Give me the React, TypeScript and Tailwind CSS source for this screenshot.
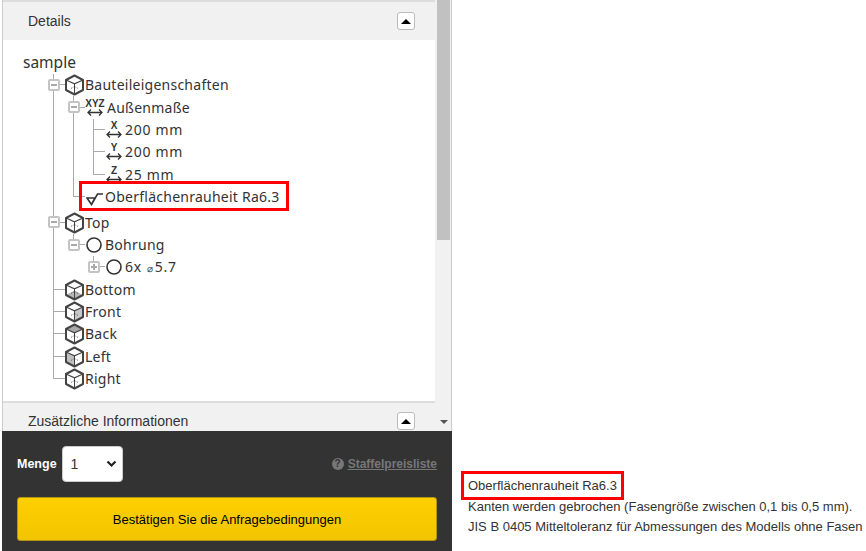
import React from "react";

type Face = "none" | "bottom" | "front" | "back" | "left";

// cube icon, gray face depends on the view
function Cube({ face = "none" }: { face?: Face }) {
  return (
    <svg width="19" height="22" viewBox="0 0 19 22" className="shrink-0" fill="none">
      {face === "bottom" && <path d="M1 16 9.5 11.5 18 16 9.5 20.5Z" fill="#b8b8b8" />}
      {face === "front" && <path d="M9.5 10 18 6V16L9.5 20.5Z" fill="#c8c8c8" />}
      {face === "back" && <path d="M1 6 9.5 1.5 18 6 9.5 10Z" fill="#a8a8a8" />}
      {face === "left" && <path d="M1 6 9.5 10V20.5L1 16Z" fill="#c0c0c0" />}
      <path d="M1 6 9.5 1.5 18 6V16L9.5 20.5 1 16Z" stroke="#444" strokeWidth="2" strokeLinejoin="round" />
      <path d="M1 6 9.5 9.8 18 6" stroke="#444" strokeWidth="1.2" />
      <path d="M9.5 10V20" stroke="#444" strokeWidth="1" />
      <path d="M9.5 12.5 5 15M9.5 12.5 14 15" stroke="#333" strokeWidth="1" strokeDasharray="1 1.6" />
    </svg>
  );
}

function Circle() {
  return (
    <svg width="16" height="16" viewBox="0 0 16 16" className="ml-px mr-[2px] shrink-0" fill="none">
      <circle cx="8" cy="8" r="7" stroke="#333" strokeWidth="1.6" />
    </svg>
  );
}

function Dim({ label, width = 16 }: { label: string; width?: number }) {
  return (
    <span className="ml-px mr-[2px] flex shrink-0 flex-col items-center" style={{ width }}>
      <span className="font-['Liberation_Sans',sans-serif] text-[10px] font-bold leading-[9px] tracking-normal text-[#333]">{label}</span>
      <svg width="16" height="9" viewBox="0 0 16 9" fill="none">
        <path d="M1 4.5H15M4 1.5 1 4.5 4 7.5M12 1.5 15 4.5 12 7.5" stroke="#333" strokeWidth="1.3" />
      </svg>
    </span>
  );
}

function Rough() {
  return (
    <svg width="18" height="14" viewBox="0 0 18 14" className="ml-px mt-1 shrink-0" fill="none">
      <path d="M1 6H9L5.5 12.5 1 6ZM5.5 12.5 11.5 2H17" stroke="#333" strokeWidth="1.6" />
    </svg>
  );
}

function Toggle({ plus }: { plus?: boolean }) {
  return (
    <span className="absolute left-[-5px] top-[5px] flex h-3 w-3 items-center justify-center rounded-[2px] border-2 border-[#c4c4c4] bg-white">
      <span className="relative block h-[2px] w-[6px] bg-[#aaa]">
        {plus && <span className="absolute left-[2px] top-[-2px] block h-[6px] w-[2px] bg-[#aaa]" />}
      </span>
    </span>
  );
}

type Node = {
  depth: number;
  icon: React.ReactNode;
  text: React.ReactNode;
  toggle?: "minus" | "plus";
  guides?: number[]; // depths that keep a vertical line running past this row
  last?: boolean;
  mark?: boolean;
};

const rows: Node[] = [
  { depth: 0, icon: <Cube />, text: "Bauteileigenschaften", toggle: "minus" },
  { depth: 1, icon: <Dim label="XYZ" width={18} />, text: "Außenmaße", toggle: "minus", guides: [0] },
  { depth: 2, icon: <Dim label="X" />, text: <span className="tracking-[0.7px]">200 mm</span>, guides: [0, 1] },
  { depth: 2, icon: <Dim label="Y" />, text: <span className="tracking-[0.7px]">200 mm</span>, guides: [0, 1] },
  { depth: 2, icon: <Dim label="Z" />, text: <span className="tracking-[0.7px]">25 mm</span>, guides: [0, 1], last: true },
  { depth: 1, icon: <Rough />, text: "Oberflächenrauheit Ra6.3", guides: [0], last: true, mark: true },
  { depth: 0, icon: <Cube />, text: "Top", toggle: "minus" },
  { depth: 1, icon: <Circle />, text: "Bohrung", toggle: "minus", guides: [0], last: true },
  {
    depth: 2,
    icon: <Circle />,
    text: (
      <span className="tracking-[0.7px]">
        6x <span className="mx-px text-[10px]">⌀</span>5.7
      </span>
    ),
    toggle: "plus",
    guides: [0],
    last: true,
  },
  { depth: 0, icon: <Cube face="bottom" />, text: "Bottom" },
  { depth: 0, icon: <Cube face="front" />, text: "Front" },
  { depth: 0, icon: <Cube face="back" />, text: "Back" },
  { depth: 0, icon: <Cube face="left" />, text: "Left" },
  { depth: 0, icon: <Cube />, text: "Right", last: true },
];

function TreeRow({ node }: { node: Node }) {
  const levels = [];
  for (let i = 0; i < node.depth; i++) {
    levels.push(
      <span key={i} className={`h-full w-5 shrink-0 ${node.guides?.includes(i) ? "border-l border-[#aaa]" : ""}`} />
    );
  }
  return (
    <>
      <div className="flex h-[22.4px] items-stretch">
        {levels}
        <span className="relative flex w-[12px] shrink-0 flex-col">
          <span className="h-1/2 border-b border-l border-[#aaa]" />
          <span className={`h-1/2 ${node.last ? "" : "border-l border-[#aaa]"}`} />
          {node.toggle && <Toggle plus={node.toggle === "plus"} />}
        </span>
        <span className="relative flex items-center gap-[1px] whitespace-nowrap">
          {node.icon}
          {node.text}
          {node.mark && <span className="absolute -bottom-[3px] -left-[6px] -right-[9px] -top-[5px] border-[3px] border-[#f00]" />}
        </span>
      </div>
      {node.mark && <div className="h-[3px] border-l border-[#aaa]" />}
    </>
  );
}

function CollapseButton() {
  return (
    <button className="flex h-[18px] w-[18px] items-center justify-center rounded-[3px] border border-[#bbb] bg-white">
      <span className="h-0 w-0 border-x-[5px] border-b-[5px] border-x-transparent border-b-black" />
    </button>
  );
}

export default function App() {
  return (
    <div className="flex h-[551px] w-[866px] overflow-hidden bg-white font-['Liberation_Sans',Arial,sans-serif]">
      {/* left column */}
      <div className="ml-[2px] flex w-[450px] shrink-0 flex-col">
        <div className="flex min-h-0 flex-1 border-x border-[#ccc]">
          <div className="flex min-w-0 flex-1 flex-col">
            <div className="flex h-10 items-center justify-between border-t-2 border-[#ddd] bg-[#f1f1f1] pl-[25px] pr-5">
              <span className="text-sm text-[#333]">Details</span>
              <CollapseButton />
            </div>
            <div className="flex-1 pt-[11px] font-['Noto_Sans',sans-serif] text-sm tracking-[0.25px] text-[#333]">
              <div className="mb-px pl-5 text-[15.5px] leading-[22px] tracking-normal">sample</div>
              <div className="pl-[50px]">
                {rows.map((r, i) => (
                  <TreeRow key={i} node={r} />
                ))}
              </div>
            </div>
            <div className="flex h-[30px] items-center justify-between border-t-2 border-[#ddd] bg-[#f1f1f1] pl-[25px] pr-5 pt-2">
              <span className="text-sm text-[#333]">Zusätzliche Informationen</span>
              <CollapseButton />
            </div>
          </div>
          {/* scrollbar */}
          <div className="flex w-4 shrink-0 flex-col bg-[#f1f1f1] pl-[2px] pr-px">
            <div className="h-[240px] bg-[#c1c1c1]" />
            <div className="mt-auto flex h-[18px] items-center justify-center">
              <span className="h-0 w-0 border-x-[4px] border-t-[4px] border-x-transparent border-t-[#555]" />
            </div>
          </div>
        </div>
        {/* footer */}
        <div className="flex h-[120px] shrink-0 flex-col bg-[#333] px-[15px] pt-[15px]">
          <div className="flex items-center justify-between">
            <div className="flex items-center gap-[5px]">
              <span className="text-[12.5px] font-bold text-white">Menge</span>
              <div className="flex h-9 w-[61px] items-center justify-between rounded-[4px] border border-[#ccc] bg-white pl-2 pr-[5px] text-sm text-[#333]">
                <span>1</span>
                <svg width="11" height="8" viewBox="0 0 11 8" fill="none">
                  <path d="M1.5 1.5 5.5 5.5 9.5 1.5" stroke="#222" strokeWidth="2.2" />
                </svg>
              </div>
            </div>
            <div className="flex items-center gap-[4px] text-xs font-bold text-[#777]">
              <span className="flex h-3 w-3 items-center justify-center rounded-full bg-[#777] text-[10px] leading-none text-[#333]">?</span>
              <span className="underline">Staffelpreisliste</span>
            </div>
          </div>
          <button className="mt-[15px] h-[44px] rounded-[3px] border border-[#b59410] bg-gradient-to-b from-[#ffd000] to-[#f0c400] pt-px text-[13px] font-normal text-black">
            Bestätigen Sie die Anfragebedingungen
          </button>
        </div>
      </div>
      {/* right column */}
      <div className="flex flex-1 flex-col justify-end pb-[14px] pl-4 text-[13px] leading-[20px] text-[#333]">
        <div className="-mb-[3px] -ml-[7px] w-fit border-[3px] border-[#f00] px-1 pt-px leading-[22px]">Oberflächenrauheit Ra6.3</div>
        <div className="whitespace-nowrap">Kanten werden gebrochen (Fasengröße zwischen 0,1 bis 0,5 mm).</div>
        <div className="whitespace-nowrap">JIS B 0405 Mitteltoleranz für Abmessungen des Modells ohne Fasen</div>
      </div>
    </div>
  );
}
